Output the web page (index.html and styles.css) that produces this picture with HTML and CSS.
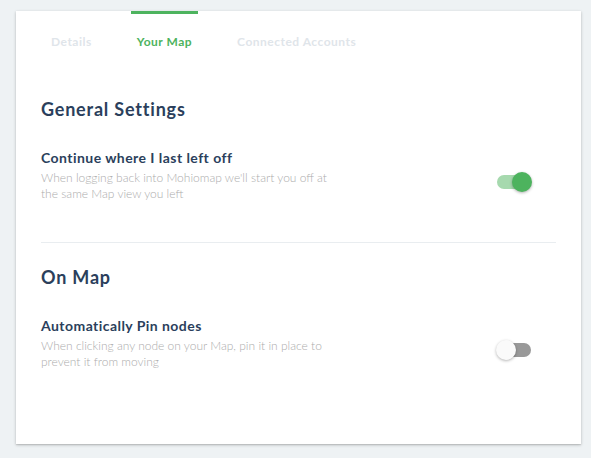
FILE: index.html
```html
<!DOCTYPE html>
<html>
<head>
<meta charset="utf-8">
<link rel="stylesheet" href="styles.css">
</head>
<body>
<div class="card">
  <nav class="tabs">
    <div class="tab">Details</div>
    <div class="tab active">Your Map</div>
    <div class="tab">Connected Accounts</div>
  </nav>
  <div class="content">
    <section class="section">
      <h2 class="section-title">General Settings</h2>
      <div class="setting">
        <div class="setting-text">
          <div class="setting-title">Continue where I last left off</div>
          <div class="setting-desc">When logging back into Mohiomap we'll start you off at<br>the same Map view you left</div>
        </div>
        <div class="switch on"><span class="track"></span><span class="thumb"></span></div>
      </div>
    </section>
    <div class="divider"></div>
    <section class="section second">
      <h2 class="section-title">On Map</h2>
      <div class="setting">
        <div class="setting-text">
          <div class="setting-title">Automatically Pin nodes</div>
          <div class="setting-desc">When clicking any node on your Map, pin it in place to<br>prevent it from moving</div>
        </div>
        <div class="switch off"><span class="track"></span><span class="thumb"></span></div>
      </div>
    </section>
  </div>
</div>
</body>
</html>
```
FILE: styles.css
```css
* { box-sizing: border-box; }
html, body { margin: 0; padding: 0; }
body {
  background: #eef2f4;
  font-family: Lato, "Open Sans", sans-serif;
  padding: 11px 10px 14px 16px;
}
.card {
  background: #fff;
  width: 565px;
  height: 433px;
  box-shadow: 0 1px 3px rgba(0,0,0,0.22), 0 1px 1px rgba(0,0,0,0.08);
}
.tabs {
  display: flex;
  gap: 33px;
  padding-left: 29px;
  height: 60px;
}
.tab {
  display: flex;
  align-items: center;
  padding: 0 6px;
  font-size: 12px;
  font-weight: 700;
  color: #dfe5ea;
  border-top: 3px solid transparent;
  padding-bottom: 3px;
  letter-spacing: 0.5px;
}
.tab.active {
  color: #4db35e;
  border-top-color: #4db35e;
}
.content {
  padding: 0 25px;
}
.section-title {
  margin: 26px 0 0;
  font-size: 18px;
  line-height: 24px;
  font-weight: 700;
  color: #2b3f5c;
  letter-spacing: 0.8px;
}
.section.second .section-title { margin-top: 22px; }
.setting {
  display: flex;
  align-items: flex-start;
  margin-top: 28px;
}
.setting-text { flex: 1; }
.setting-title {
  font-size: 14px;
  line-height: 18px;
  font-weight: 700;
  color: #2b3f5c;
  letter-spacing: 0.45px;
}
.setting-desc {
  margin-top: 3px;
  font-size: 12px;
  line-height: 16px;
  font-weight: 300;
  color: #acacac;
}
.divider {
  height: 1px;
  background: #e9edf0;
  margin-top: 40px;
}
.switch {
  position: relative;
  width: 34px;
  height: 14px;
  margin-top: 26px;
  margin-right: 25px;
}
.track {
  display: block;
  width: 34px;
  height: 14px;
  border-radius: 7px;
}
.thumb {
  position: absolute;
  top: -3px;
  width: 20px;
  height: 20px;
  border-radius: 50%;
  box-shadow: 0 1px 3px rgba(0,0,0,0.3);
}
.switch.on .track { background: #a6d9ae; }
.switch.on .thumb { left: 15px; background: #4db35e; }
.switch.off .track { background: #999; }
.switch.off .thumb { left: -1px; background: #fafafa; }
```
